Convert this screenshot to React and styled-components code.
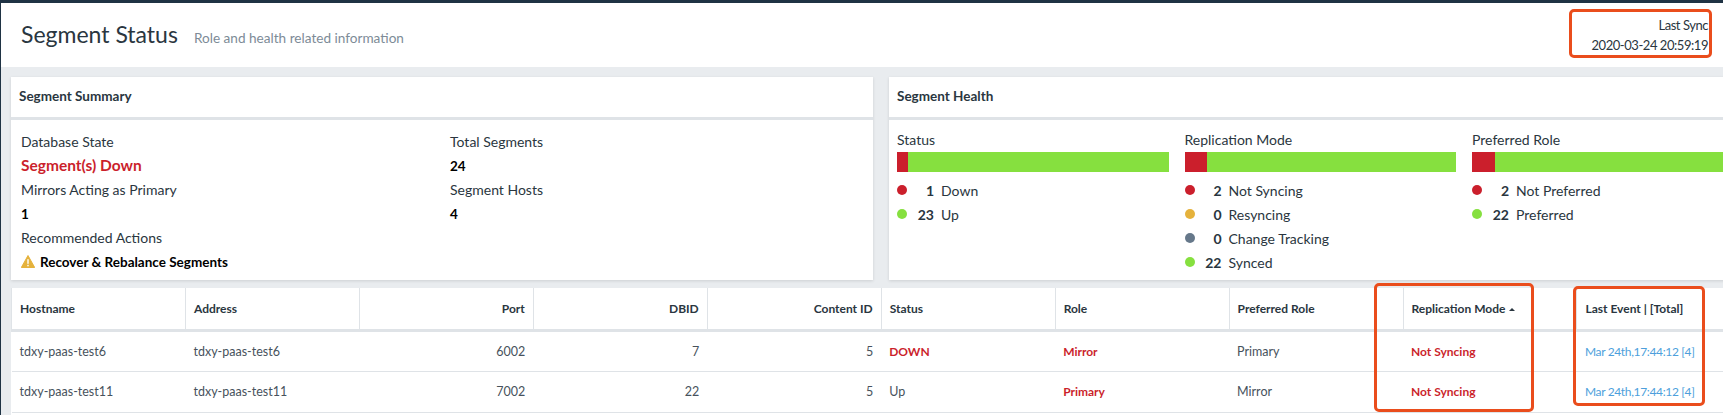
import styled, { createGlobalStyle } from 'styled-components'

const colors = {
	red: '#cb1f2c',
	green: '#86e03f',
	amber: '#e5b23c',
	slate: '#66788a',
	text: '#2a3640',
	body: '#47525c',
	muted: '#7d8b97',
	line: '#dfe3e7',
	page: '#e9ecef',
	dark: '#1f3344',
	link: '#4d9fdc',
	note: '#ea4d1c',
}

const GlobalStyle = createGlobalStyle`
	html, body {
		margin: 0;
		padding: 0;
		background: #ffffff;
	}
	body {
		font-family: 'Lato', 'Noto Sans', sans-serif;
		font-size: 14px;
		color: ${colors.text};
	}
`

const Page = styled.div`
	position: relative;
	width: 1723px;
	height: 415px;
	box-sizing: border-box;
	overflow: hidden;
	border-top: 3px solid ${colors.dark};
	border-left: 1px solid ${colors.dark};
	background: ${colors.page};
`

const Header = styled.header`
	height: 64px;
	box-sizing: border-box;
	padding: 0 15px 0 20px;
	background: #ffffff;
	display: flex;
	align-items: center;
	justify-content: space-between;
`

const TitleGroup = styled.div`
	display: flex;
	align-items: baseline;
	gap: 16px;
	margin-top: -3px;
`

const Title = styled.h1`
	margin: 0;
	font-size: 23px;
	font-weight: 400;
	color: ${colors.text};
`

const Subtitle = styled.span`
	font-size: 13.6px;
	color: ${colors.muted};
`

const SyncInfo = styled.div`
	text-align: right;
	font-size: 13px;
	letter-spacing: -0.45px;
	line-height: 20px;
	margin-top: -1px;
`

const Main = styled.main`
	padding: 10px 0 0 10px;
`

const CardRow = styled.div`
	display: grid;
	grid-template-columns: 862px 880px;
	gap: 16px;
`

const Card = styled.section`
	height: 203px;
	background: #ffffff;
	box-shadow: 0 1px 3px rgba(0, 0, 0, 0.12);
`

const CardTitle = styled.h2`
	margin: 0;
	height: 43px;
	box-sizing: border-box;
	padding: 0 8px 2px;
	display: flex;
	align-items: center;
	font-size: 13.5px;
	font-weight: 700;
	color: ${colors.text};
	border-bottom: 3px solid ${colors.line};
`

const SummaryBody = styled.div`
	padding: 10px 10px 0;
	display: grid;
	grid-template-columns: 429px 1fr;
`

const SummaryColumn = styled.div`
	display: flex;
	flex-direction: column;
`

const SummaryLine = styled.div`
	height: 24px;
	line-height: ${(props) => (props.$large ? '22px' : '24px')};
	font-size: ${(props) => (props.$large ? '15.5px' : props.$strong ? '13.5px' : '14px')};
	font-weight: ${(props) => (props.$large || props.$strong ? 700 : 400)};
	color: ${(props) => (props.$large ? colors.red : props.$strong ? '#000000' : colors.text)};
	display: flex;
	align-items: flex-start;
	gap: 5px;
`

const WarningMark = styled.svg`
	margin-top: 5px;
`

const HealthBody = styled.div`
	padding: 10px 8px 0;
	display: grid;
	grid-template-columns: repeat(3, 271.5px);
	gap: 16px;
`

const HealthTitle = styled.div`
	height: 20px;
	line-height: 20px;
	font-size: 14px;
	margin-bottom: 2px;
`

const Bar = styled.div`
	height: 20px;
	display: flex;
	background: ${colors.green};
	margin-bottom: 6px;
`

const BarPart = styled.div`
	background: ${colors.red};
`

const LegendRow = styled.div`
	height: 24px;
	display: flex;
	align-items: center;
`

const Dot = styled.span`
	width: 10px;
	height: 10px;
	border-radius: 50%;
	background: ${(props) => props.$color};
`

const Count = styled.span`
	width: 27px;
	text-align: right;
	font-weight: 700;
	color: ${colors.text};
	margin-right: 7px;
`

const Table = styled.table`
	margin-top: 8px;
	width: 1740px;
	table-layout: fixed;
	border-collapse: collapse;
	background: #ffffff;
`

const HeadCell = styled.th`
	height: 42px;
	box-sizing: border-box;
	padding: 0 8px;
	font-size: 12px;
	font-weight: 700;
	text-align: ${(props) => (props.$right ? 'right' : 'left')};
	color: ${colors.text};
	border-left: 1px solid ${colors.line};
	border-bottom: 3px solid ${colors.line};
	white-space: nowrap;
`

const Cell = styled.td`
	height: 41px;
	box-sizing: border-box;
	padding: 0 8px;
	font-size: ${(props) => (props.$alert || props.$link ? '12px' : '12.5px')};
	letter-spacing: ${(props) => (props.$link ? '-0.35px' : 'normal')};
	text-align: ${(props) => (props.$right ? 'right' : 'left')};
	color: ${(props) => (props.$alert ? colors.red : props.$link ? colors.link : colors.body)};
	font-weight: ${(props) => (props.$alert ? 700 : 400)};
	border-bottom: 1px solid ${colors.line};
	white-space: nowrap;
`

const SortCaret = styled.span`
	display: inline-block;
	margin-left: 4px;
	vertical-align: middle;
	border-left: 3px solid transparent;
	border-right: 3px solid transparent;
	border-bottom: 3px solid ${colors.text};
`

const NoteBox = styled.div`
	position: absolute;
	left: ${(props) => props.$left}px;
	top: ${(props) => props.$top}px;
	width: ${(props) => props.$width}px;
	height: ${(props) => props.$height}px;
	box-sizing: border-box;
	border: 3px solid ${colors.note};
	border-radius: 5px;
	pointer-events: none;
`

const health = [
	{
		title: 'Status',
		rows: [
			[colors.red, 1, 'Down'],
			[colors.green, 23, 'Up'],
		],
	},
	{
		title: 'Replication Mode',
		rows: [
			[colors.red, 2, 'Not Syncing'],
			[colors.amber, 0, 'Resyncing'],
			[colors.slate, 0, 'Change Tracking'],
			[colors.green, 22, 'Synced'],
		],
	},
	{
		title: 'Preferred Role',
		rows: [
			[colors.red, 2, 'Not Preferred'],
			[colors.green, 22, 'Preferred'],
		],
	},
]

const segments = [
	{ host: 'tdxy-paas-test6', port: 6002, dbid: 7, status: 'DOWN', role: 'Mirror', preferred: 'Primary' },
	{ host: 'tdxy-paas-test11', port: 7002, dbid: 22, status: 'Up', role: 'Primary', preferred: 'Mirror' },
]

function WarningIcon() {
	return (
		<WarningMark width="14" height="13" viewBox="0 0 14 13">
			<path d="M7 0.5 L13.7 12.5 L0.3 12.5 Z" fill={colors.amber} stroke={colors.amber} strokeLinejoin="round" />
			<rect x="6.3" y="4.2" width="1.4" height="4.6" fill="#ffffff" />
			<rect x="6.3" y="9.8" width="1.4" height="1.5" fill="#ffffff" />
		</WarningMark>
	)
}

function App() {
	return (
		<Page>
			<GlobalStyle />
			<Header>
				<TitleGroup>
					<Title>Segment Status</Title>
					<Subtitle>Role and health related information</Subtitle>
				</TitleGroup>
				<SyncInfo>
					<div>Last Sync</div>
					<div>2020-03-24 20:59:19</div>
				</SyncInfo>
			</Header>
			<Main>
				<CardRow>
					<Card>
						<CardTitle>Segment Summary</CardTitle>
						<SummaryBody>
							<SummaryColumn>
								<SummaryLine>Database State</SummaryLine>
								<SummaryLine $large>Segment(s) Down</SummaryLine>
								<SummaryLine>Mirrors Acting as Primary</SummaryLine>
								<SummaryLine $strong>1</SummaryLine>
								<SummaryLine>Recommended Actions</SummaryLine>
								<SummaryLine $strong>
									<WarningIcon />
									Recover &amp; Rebalance Segments
								</SummaryLine>
							</SummaryColumn>
							<SummaryColumn>
								<SummaryLine>Total Segments</SummaryLine>
								<SummaryLine $strong>24</SummaryLine>
								<SummaryLine>Segment Hosts</SummaryLine>
								<SummaryLine $strong>4</SummaryLine>
							</SummaryColumn>
						</SummaryBody>
					</Card>
					<Card>
						<CardTitle>Segment Health</CardTitle>
						<HealthBody>
							{health.map((group) => {
								const total = group.rows.reduce((sum, row) => sum + row[1], 0)
								return (
									<div key={group.title}>
										<HealthTitle>{group.title}</HealthTitle>
										<Bar>
											<BarPart style={{ width: `${(group.rows[0][1] / total) * 100}%` }} />
										</Bar>
										{group.rows.map(([color, count, label]) => (
											<LegendRow key={label}>
												<Dot $color={color} />
												<Count>{count}</Count>
												{label}
											</LegendRow>
										))}
									</div>
								)
							})}
						</HealthBody>
					</Card>
				</CardRow>
				<Table>
					<thead>
						<tr>
							<HeadCell>Hostname</HeadCell>
							<HeadCell>Address</HeadCell>
							<HeadCell $right>Port</HeadCell>
							<HeadCell $right>DBID</HeadCell>
							<HeadCell $right>Content ID</HeadCell>
							<HeadCell>Status</HeadCell>
							<HeadCell>Role</HeadCell>
							<HeadCell>Preferred Role</HeadCell>
							<HeadCell>
								Replication Mode
								<SortCaret />
							</HeadCell>
							<HeadCell>Last Event | [Total]</HeadCell>
						</tr>
					</thead>
					<tbody>
						{segments.map((segment) => (
							<tr key={segment.host}>
								<Cell>{segment.host}</Cell>
								<Cell>{segment.host}</Cell>
								<Cell $right>{segment.port}</Cell>
								<Cell $right>{segment.dbid}</Cell>
								<Cell $right>5</Cell>
								<Cell $alert={segment.status === 'DOWN'}>{segment.status}</Cell>
								<Cell $alert>{segment.role}</Cell>
								<Cell>{segment.preferred}</Cell>
								<Cell $alert>Not Syncing</Cell>
								<Cell $link>Mar 24th,17:44:12 [4]</Cell>
							</tr>
						))}
						<tr>
							<Cell colSpan={10} />
						</tr>
					</tbody>
				</Table>
			</Main>
			<NoteBox $left={1568} $top={6} $width={143} $height={49} />
			<NoteBox $left={1373} $top={280} $width={160} $height={129} />
			<NoteBox $left={1572} $top={283} $width={132} $height={120} />
		</Page>
	)
}

export default App
